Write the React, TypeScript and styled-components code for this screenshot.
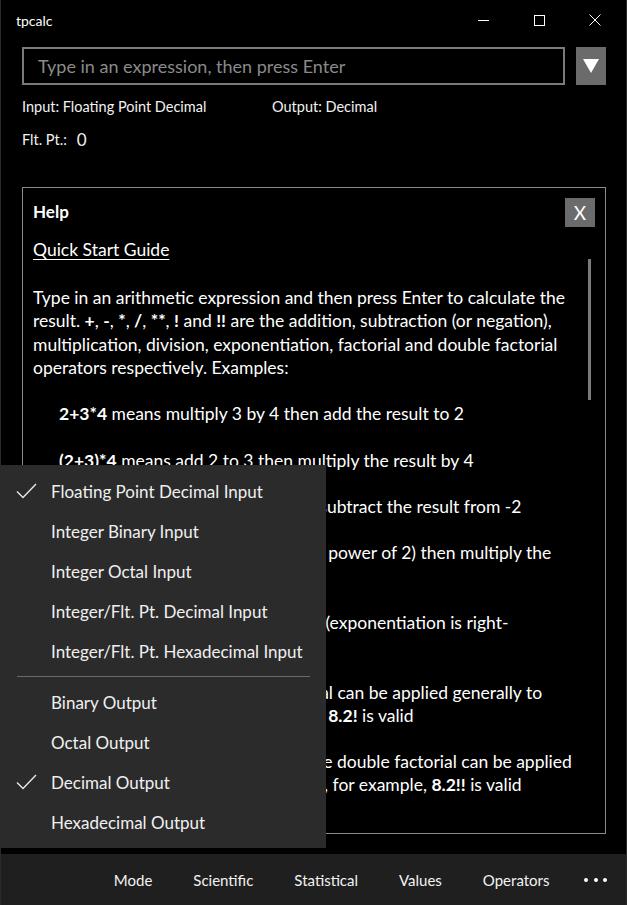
import React from 'react';
import styled, { createGlobalStyle } from 'styled-components';

const GlobalStyle = createGlobalStyle`
  html, body {
    margin: 0;
    padding: 0;
    background: #000;
  }
  body {
    font-family: Lato, "Open Sans", "Noto Sans", sans-serif;
    color: #fff;
  }
`;

const Window = styled.div`
  position: relative;
  width: 627px;
  height: 905px;
  box-sizing: border-box;
  background: #000;
  border-left: 1px solid #2a2a2a;
  border-right: 1px solid #2a2a2a;
  display: flex;
  flex-direction: column;
  overflow: hidden;
`;

const TitleBar = styled.div`
  height: 40px;
  display: flex;
  align-items: center;
  padding-left: 15px;
  padding-right: 3px;
`;

const Title = styled.div`
  flex: 1;
  font-size: 14px;
  color: #fff;
`;

const CaptionButton = styled.div`
  width: 56px;
  height: 40px;
  display: flex;
  align-items: center;
  justify-content: center;
`;

const Main = styled.div`
  flex: 1;
  display: flex;
  flex-direction: column;
  padding: 7px 20px 0 21px;
`;

const InputRow = styled.div`
  display: flex;
  gap: 11px;
  height: 38px;
`;

const ExpressionBox = styled.div`
  flex: 1;
  box-sizing: border-box;
  border: 2px solid #7a7a7a;
  display: flex;
  align-items: center;
  padding-left: 14px;
  font-size: 18px;
  color: #8a8a8a;
`;

const DropButton = styled.div`
  width: 30px;
  background: #6b6b6b;
  display: flex;
  align-items: center;
  justify-content: center;
`;

const InfoRow = styled.div<{ $top: number }>`
  display: flex;
  align-items: center;
  height: 20px;
  margin-top: ${(p) => p.$top}px;
  font-size: 14.5px;
  color: #f2f2f2;
`;

const InfoLabel = styled.span<{ $width?: number }>`
  width: ${(p) => (p.$width ? `${p.$width}px` : 'auto')};
`;

const FltValue = styled.span`
  margin-left: 10px;
  font-size: 17px;
`;

const HelpBox = styled.div`
  margin-top: 38px;
  height: 647px;
  box-sizing: border-box;
  border: 1px solid #8a8a8a;
  display: flex;
  flex-direction: column;
  padding: 9px 10px 0 10px;
  overflow: hidden;
`;

const HelpHeader = styled.div`
  display: flex;
  align-items: center;
  justify-content: space-between;
  height: 30px;
`;

const HelpTitle = styled.div`
  font-size: 17px;
  font-weight: 700;
  margin-top: -2px;
`;

const CloseButton = styled.div`
  width: 30px;
  height: 29px;
  background: #6b6b6b;
  display: flex;
  align-items: center;
  justify-content: center;
  font-size: 19px;
  color: #fff;
`;

const HelpBody = styled.div`
  flex: 1;
  display: flex;
  margin-top: 11px;
  overflow: hidden;
`;

const HelpText = styled.div`
  flex: 1;
  font-size: 17.5px;
  line-height: 23.2px;
  color: #fff;
`;

const GuideLink = styled.div`
  text-decoration: underline;
  text-underline-offset: 3px;
  margin-bottom: 25px;
`;

const Para = styled.p<{ $indent?: boolean }>`
  margin: 0 0 23.2px 0;
  padding-left: ${(p) => (p.$indent ? 26 : 0)}px;
  white-space: ${(p) => (p.$indent ? 'nowrap' : 'normal')};
`;

const ScrollTrack = styled.div`
  width: 3px;
  margin-left: 8px;
  margin-right: 4px;
  padding-top: 21px;
`;

const ScrollThumb = styled.div`
  height: 141px;
  background: #7a7a7a;
`;

const Menu = styled.div`
  position: absolute;
  left: 0;
  top: 465px;
  width: 325px;
  box-sizing: border-box;
  background: #2b2b2b;
  padding: 6px 0;
  z-index: 2;
`;

const MenuItem = styled.div`
  height: 40px;
  display: flex;
  align-items: center;
  font-size: 17px;
  color: #f0f0f0;
`;

const CheckSlot = styled.div`
  width: 50px;
  display: flex;
  justify-content: center;
  padding-right: 1px;
  margin-right: -1px;
`;

const Separator = styled.div`
  height: 1px;
  margin: 5px 16px 5px 16px;
  background: #6a6a6a;
`;

const CommandBar = styled.div`
  height: 52px;
  margin-top: 20px;
  background: #1f1f1f;
  display: flex;
  align-items: center;
  justify-content: flex-end;
  padding-right: 19px;
`;

const CommandButton = styled.div`
  padding: 0 20.5px;
  font-size: 15px;
  color: #f2f2f2;
`;

const MoreButton = styled.div`
  display: flex;
  gap: 5.5px;
  padding-left: 14px;
`;

const Dot = styled.span`
  width: 4px;
  height: 4px;
  border-radius: 50%;
  background: #fff;
`;

const CheckIcon = () => (
  <svg width="21" height="16" viewBox="0 0 21 16">
    <path d="M1 8.5 L7 14.5 L20 1" fill="none" stroke="#e8e8e8" strokeWidth="1.4" />
  </svg>
);

const inputModes = [
  'Floating Point Decimal Input',
  'Integer Binary Input',
  'Integer Octal Input',
  'Integer/Flt. Pt. Decimal Input',
  'Integer/Flt. Pt. Hexadecimal Input',
];
const outputModes = ['Binary Output', 'Octal Output', 'Decimal Output', 'Hexadecimal Output'];
const commands = ['Mode', 'Scientific', 'Statistical', 'Values', 'Operators'];

export default function App() {
  return (
    <>
      <GlobalStyle />
      <Window>
        <TitleBar>
          <Title>tpcalc</Title>
          <CaptionButton>
            <svg width="11" height="11" viewBox="0 0 11 11">
              <path d="M0 5.5 H11" stroke="#fff" strokeWidth="1" />
            </svg>
          </CaptionButton>
          <CaptionButton>
            <svg width="11" height="11" viewBox="0 0 11 11">
              <rect x="0.5" y="0.5" width="10" height="10" fill="none" stroke="#fff" strokeWidth="1" />
            </svg>
          </CaptionButton>
          <CaptionButton>
            <svg width="12" height="12" viewBox="0 0 12 12">
              <path d="M0.5 0.5 L11.5 11.5 M11.5 0.5 L0.5 11.5" stroke="#fff" strokeWidth="1" />
            </svg>
          </CaptionButton>
        </TitleBar>
        <Main>
          <InputRow>
            <ExpressionBox>Type in an expression, then press Enter</ExpressionBox>
            <DropButton>
              <svg width="16" height="14" viewBox="0 0 16 14">
                <path d="M0 0 H16 L8 14 Z" fill="#fff" />
              </svg>
            </DropButton>
          </InputRow>
          <InfoRow $top={11}>
            <InfoLabel $width={250}>Input: Floating Point Decimal</InfoLabel>
            <InfoLabel>Output: Decimal</InfoLabel>
          </InfoRow>
          <InfoRow $top={13}>
            <InfoLabel>Flt. Pt.:</InfoLabel>
            <FltValue>0</FltValue>
          </InfoRow>
          <HelpBox>
            <HelpHeader>
              <HelpTitle>Help</HelpTitle>
              <CloseButton>X</CloseButton>
            </HelpHeader>
            <HelpBody>
              <HelpText>
                <GuideLink>Quick Start Guide</GuideLink>
                <Para>
                  Type in an arithmetic expression and then press Enter to calculate the result.{' '}
                  <b>+</b>, <b>-</b>, <b>*</b>, <b>/</b>, <b>**</b>, <b>!</b> and <b>!!</b> are the addition,
                  subtraction (or negation), multiplication, division, exponentiation, factorial and double
                  factorial operators respectively. Examples:
                </Para>
                <Para $indent>
                  <b>2+3*4</b> means multiply 3 by 4 then add the result to 2
                </Para>
                <Para $indent>
                  <b>(2+3)*4</b> means add 2 to 3 then multiply the result by 4
                </Para>
                <Para $indent>
                  <b>-2-3*4</b> means multiply 3 by 4 and subtract the result from -2
                </Para>
                <Para $indent>
                  <b>2*3**2</b> means square 3 (ie 3 to the power of 2) then multiply the
                  <br />
                  result by 2
                </Para>
                <Para $indent>
                  <b>2**3**2</b> means: raise 2 to power 9 (exponentiation is right-
                  <br />
                  associative)
                </Para>
                <Para $indent>
                  Note also that in tpcalc the factorial can be applied generally to
                  <br />
                  non-integer real arguments too, eg <b>8.2!</b> is valid
                </Para>
                <Para $indent>
                  Note also that, like the factorial, the double factorial can be applied
                  <br />
                  to non-integer and negative values, for example, <b>8.2!!</b> is valid
                </Para>
              </HelpText>
              <ScrollTrack>
                <ScrollThumb />
              </ScrollTrack>
            </HelpBody>
          </HelpBox>
        </Main>
        <CommandBar>
          {commands.map((c) => (
            <CommandButton key={c}>{c}</CommandButton>
          ))}
          <MoreButton>
            <Dot />
            <Dot />
            <Dot />
          </MoreButton>
        </CommandBar>
        <Menu>
          {inputModes.map((m, i) => (
            <MenuItem key={m}>
              <CheckSlot>{i === 0 && <CheckIcon />}</CheckSlot>
              {m}
            </MenuItem>
          ))}
          <Separator />
          {outputModes.map((m) => (
            <MenuItem key={m}>
              <CheckSlot>{m === 'Decimal Output' && <CheckIcon />}</CheckSlot>
              {m}
            </MenuItem>
          ))}
        </Menu>
      </Window>
    </>
  );
}
